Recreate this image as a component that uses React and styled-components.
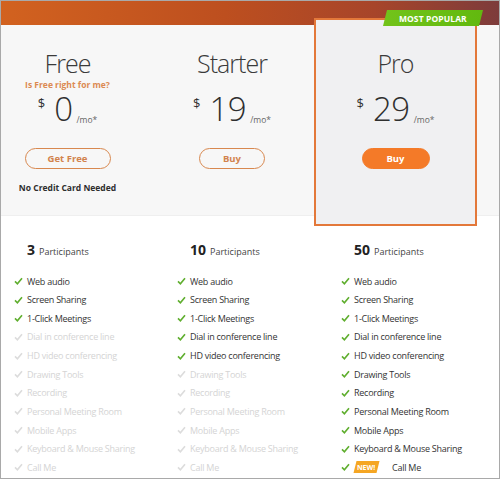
import React from 'react';
import styled, { createGlobalStyle } from 'styled-components';

const GlobalStyle = createGlobalStyle`
    * { box-sizing: border-box; }
    body {
        margin: 0;
        background: #fff;
        font-family: "Open Sans", "Liberation Sans", sans-serif;
    }
`;

const Page = styled.div`
    width: 500px;
    height: 479px;
    border: 1px solid #a9a9a9;
    background: #fff;
    overflow: hidden;
`;

const Top = styled.div`
    height: 215px;
    background:
        linear-gradient(90deg, #d2621f 0%, #bd4f1f 45%, #a7452a 75%, #7d3b3b 100%) top / 100% 24px no-repeat,
        #f7f7f7;
    border-bottom: 1px solid #efefef;
    display: grid;
    grid-template-columns: 149px 164px 163px;
    padding-top: 17px;
`;

const Plan = styled.div`
    position: relative;
    height: 208px;
    display: flex;
    flex-direction: column;
    align-items: center;
    border: 2px solid ${p => (p.$featured ? '#e3783a' : 'transparent')};
    background: ${p => (p.$featured ? '#f0f0f2' : 'transparent')};
    padding-right: ${p => (p.$narrow ? '16px' : '0')};
`;

const Badge = styled.div`
    position: absolute;
    top: -10px;
    right: -6px;
    width: 96px;
    height: 16px;
    background: linear-gradient(90deg, #72c31a, #62b90f);
    transform: skewX(-14deg);
    display: flex;
    align-items: center;
    justify-content: center;

    span {
        transform: skewX(14deg);
        color: #fff;
        font-size: 8.5px;
        font-weight: 700;
        letter-spacing: 0.1px;
    }
`;

const Title = styled.div`
    margin-top: 28px;
    font-size: 25px;
    line-height: 30px;
    font-weight: 300;
    letter-spacing: -1px;
    color: #3a3a3a;
`;

const Note = styled.div`
    margin-top: 1px;
    height: 12px;
    font-size: 8.5px;
    line-height: 12px;
    font-weight: 700;
    color: #dc8a52;
`;

const Price = styled.div`
    display: flex;
    align-items: flex-start;
    margin-top: 5px;
    height: 30px;
    color: #2f2f2f;
`;

const Dollar = styled.span`
    font-size: 13px;
    line-height: 13px;
    margin-top: 1px;
    margin-right: 9px;
`;

const Amount = styled.span`
    font-size: 33px;
    line-height: 26px;
    font-weight: 300;
    letter-spacing: -0.5px;
`;

const Per = styled.span`
    align-self: flex-end;
    font-size: 8.5px;
    line-height: 10px;
    color: #666;
    margin-left: 4px;
    margin-bottom: 1px;
`;

const Button = styled.button`
    margin-top: 22px;
    width: ${p => p.$w}px;
    height: 21px;
    border-radius: 11px;
    font-family: inherit;
    font-size: 9.5px;
    font-weight: 700;
    cursor: pointer;
    border: 1.5px solid ${p => (p.$filled ? '#f47a28' : '#d8884f')};
    background: ${p => (p.$filled ? '#f47a28' : 'transparent')};
    color: ${p => (p.$filled ? '#fff' : '#d2834d')};
`;

const Hint = styled.div`
    margin-top: 13px;
    font-size: 8.5px;
    line-height: 12px;
    font-weight: 700;
    color: #2e2e2e;
`;

const Features = styled.div`
    display: grid;
    grid-template-columns: 163px 164px 164px;
    padding: 25px 0 0 13px;
`;

const Column = styled.div`
    display: flex;
    flex-direction: column;
`;

const Participants = styled.div`
    padding-left: 13px;
    height: 18px;
    line-height: 18px;
    margin-bottom: 12.7px;
    font-size: 9px;
    color: #444;

    b {
        font-size: 14px;
        font-weight: 700;
        color: #222;
        margin-right: 4px;
    }
`;

const Row = styled.div`
    display: flex;
    align-items: center;
    height: 18.65px;
    font-size: 9px;
    letter-spacing: -0.25px;
    color: ${p => (p.$off ? '#d4d4d4' : '#333')};

    svg {
        flex: none;
        margin-right: 4px;
    }
`;

const New = styled.span`
    display: inline-flex;
    align-items: center;
    justify-content: center;
    width: 23px;
    height: 12px;
    margin: 0 14px 0 1px;
    background: #f5a623;
    transform: skewX(-14deg);

    span {
        transform: skewX(14deg);
        font-size: 7px;
        font-weight: 700;
        letter-spacing: 0;
        color: #fff;
    }
`;

const Check = ({ off }) => (
    <svg width="9" height="8" viewBox="0 0 9 8">
        <path d="M1 4.4 L3.4 6.8 L8 1.2" fill="none" stroke={off ? '#dcdcdc' : '#5fae2e'} strokeWidth="1.6" />
    </svg>
);

const names = [
    'Web audio',
    'Screen Sharing',
    '1-Click Meetings',
    'Dial in conference line',
    'HD video conferencing',
    'Drawing Tools',
    'Recording',
    'Personal Meeting Room',
    'Mobile Apps',
    'Keyboard & Mouse Sharing',
    'Call Me',
];

const tiers = [
    { count: 3, on: 3 },
    { count: 10, on: 5 },
    { count: 50, on: 11 },
];

function App() {
    return (
        <Page>
            <GlobalStyle />
            <Top>
                <Plan $narrow>
                    <Title>Free</Title>
                    <Note>Is Free right for me?</Note>
                    <Price>
                        <Dollar>$</Dollar>
                        <Amount>0</Amount>
                        <Per>/mo*</Per>
                    </Price>
                    <Button $w={86}>Get Free</Button>
                    <Hint>No Credit Card Needed</Hint>
                </Plan>
                <Plan>
                    <Title>Starter</Title>
                    <Note />
                    <Price>
                        <Dollar>$</Dollar>
                        <Amount>19</Amount>
                        <Per>/mo*</Per>
                    </Price>
                    <Button $w={66}>Buy</Button>
                </Plan>
                <Plan $featured>
                    <Badge><span>MOST POPULAR</span></Badge>
                    <Title>Pro</Title>
                    <Note />
                    <Price>
                        <Dollar>$</Dollar>
                        <Amount>29</Amount>
                        <Per>/mo*</Per>
                    </Price>
                    <Button $w={68} $filled>Buy</Button>
                </Plan>
            </Top>
            <Features>
                {tiers.map(t => (
                    <Column key={t.count}>
                        <Participants><b>{t.count}</b>Participants</Participants>
                        {names.map((n, i) => {
                            const off = i >= t.on;
                            const isNew = t.count === 50 && n === 'Call Me';
                            return (
                                <Row key={n} $off={off}>
                                    <Check off={off} />
                                    {isNew && <New><span>NEW!</span></New>}
                                    {n}
                                </Row>
                            );
                        })}
                    </Column>
                ))}
            </Features>
        </Page>
    );
}

export default App;
